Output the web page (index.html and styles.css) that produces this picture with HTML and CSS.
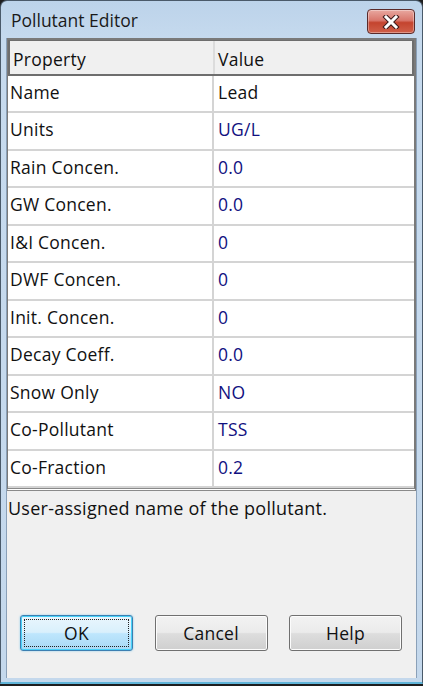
FILE: index.html
```html
<!DOCTYPE html>
<html>
<head>
<meta charset="utf-8">
<link rel="stylesheet" href="styles.css">
</head>
<body>
<div class="window">
  <div class="titlebar">
    <span class="title">Pollutant Editor</span>
    <div class="close">
      <svg width="20" height="14" viewBox="0 0 20 14">
        <path d="M5 2 L15 12 M15 2 L5 12" stroke="#3a1a1a" stroke-width="5" stroke-linecap="square" fill="none"/>
        <path d="M5 2 L15 12 M15 2 L5 12" stroke="#ffffff" stroke-width="3" stroke-linecap="square" fill="none"/>
      </svg>
    </div>
  </div>
  <div class="client">
    <div class="grid">
      <div class="head">
        <div class="hcell">Property</div>
        <div class="hcell">Value</div>
      </div>
      <div class="rows">
        <div class="row"><div class="cell">Name</div><div class="cell val plain">Lead</div></div>
        <div class="row"><div class="cell">Units</div><div class="cell val">UG/L</div></div>
        <div class="row"><div class="cell">Rain Concen.</div><div class="cell val">0.0</div></div>
        <div class="row"><div class="cell">GW Concen.</div><div class="cell val">0.0</div></div>
        <div class="row"><div class="cell">I&amp;I Concen.</div><div class="cell val">0</div></div>
        <div class="row"><div class="cell">DWF Concen.</div><div class="cell val">0</div></div>
        <div class="row"><div class="cell">Init. Concen.</div><div class="cell val">0</div></div>
        <div class="row"><div class="cell">Decay Coeff.</div><div class="cell val">0.0</div></div>
        <div class="row"><div class="cell">Snow Only</div><div class="cell val">NO</div></div>
        <div class="row"><div class="cell">Co-Pollutant</div><div class="cell val">TSS</div></div>
        <div class="row"><div class="cell">Co-Fraction</div><div class="cell val">0.2</div></div>
      </div>
    </div>
    <div class="desc">User-assigned name of the pollutant.</div>
    <div class="buttons">
      <button class="btn default"><span class="focus">OK</span></button>
      <button class="btn">Cancel</button>
      <button class="btn">Help</button>
    </div>
  </div>
</div>
</body>
</html>
```
FILE: styles.css
```css
* { box-sizing: border-box; }
html, body {
  margin: 0;
  padding: 0;
  background: #1e1e1e;
}
body {
  width: 423px;
  height: 686px;
  font-family: "Open Sans", "Noto Sans", sans-serif;
  letter-spacing: 0.25px;
}
.window {
  width: 423px;
  height: 684px;
  border-radius: 7px 7px 0 0;
  background: linear-gradient(#bcd3ea, #c6daee 40px, #c4d8ec);
  border: 1px solid #4a5a6a;
  border-bottom: 2px solid #5fb4d8;
  display: flex;
  flex-direction: column;
}
.titlebar {
  height: 37px;
  display: flex;
  align-items: center;
  justify-content: space-between;
  padding: 0 7px 0 10px;
}
.title {
  font-size: 17.5px;
  color: #1a1a1a;
  margin-top: 1px;
  letter-spacing: 0;
}
.close {
  width: 48px;
  height: 25px;
  margin-top: 4px;
  border: 1px solid #5a2a2a;
  border-radius: 4px;
  background: linear-gradient(#e8a8a0, #d9776c 45%, #c4442f 55%, #d0604a);
  display: flex;
  align-items: center;
  justify-content: center;
  box-shadow: inset 0 0 0 1px rgba(255,255,255,0.35);
}
.client {
  flex: 1;
  margin: 0 5px 4px 5px;
  background: #f0f0f0;
  display: flex;
  flex-direction: column;
  border-left: 1px solid #8aa0b8;
  border-right: 1px solid #8aa0b8;
}
.grid {
  background: #ffffff;
  border: 2px solid #7a7a7a;
  border-left-width: 1px;
  border-bottom: 3px double #8a8a8a;
  height: 453px;
  display: flex;
  flex-direction: column;
}
.head {
  height: 36px;
  display: grid;
  grid-template-columns: 203px 1fr;
  background: #f0f0f0;
  border: 2px solid #6e6e6e;
  border-top: 1px solid #6e6e6e;
}
.hcell {
  font-size: 17.5px;
  line-height: 24px;
  color: #111;
  padding: 6px 4px 0 3px;
}
.hcell + .hcell {
  border-left: 2px solid #dcdcdc;
  padding-left: 3px;
}
.rows {
  display: flex;
  flex-direction: column;
}
.row {
  height: 37.5px;
  display: grid;
  grid-template-columns: 204px 1fr;
  border-bottom: 2px solid #d4d4d4;
}
.cell {
  font-size: 17.5px;
  line-height: 24px;
  color: #111;
  padding: 4px 4px 0 2px;
}
.cell.val {
  border-left: 2px solid #d4d4d4;
  padding-left: 4px;
  color: #101080;
}
.cell.val.plain { color: #111; }
.desc {
  font-size: 18px;
  color: #111;
  padding: 5px 1px;
}
.buttons {
  margin-top: auto;
  display: flex;
  gap: 21.5px;
  padding: 0 0 27px 13px;
}
.btn {
  width: 113px;
  height: 36px;
  font-family: "Open Sans", "Noto Sans", sans-serif;
  font-size: 17.5px;
  letter-spacing: 0.25px;
  color: #111;
  border: 1px solid #707070;
  border-radius: 3px;
  background: linear-gradient(#f2f2f2 0%, #ebebeb 48%, #dddddd 52%, #cfcfcf 100%);
  box-shadow: inset 0 0 0 1px #fcfcfc;
  padding: 0;
}
.btn.default {
  border: 1px solid #3c7fb1;
  background: linear-gradient(#eaf6fd 0%, #d9f0fc 48%, #bee6fd 52%, #a7d9f5 100%);
  box-shadow: inset 0 0 0 1px #48d2f9, 0 0 2px #7ec8ec;
  padding: 3px;
}
.focus {
  display: flex;
  width: 100%;
  height: 100%;
  align-items: center;
  justify-content: center;
  border: 1px dotted #222;
}
```
